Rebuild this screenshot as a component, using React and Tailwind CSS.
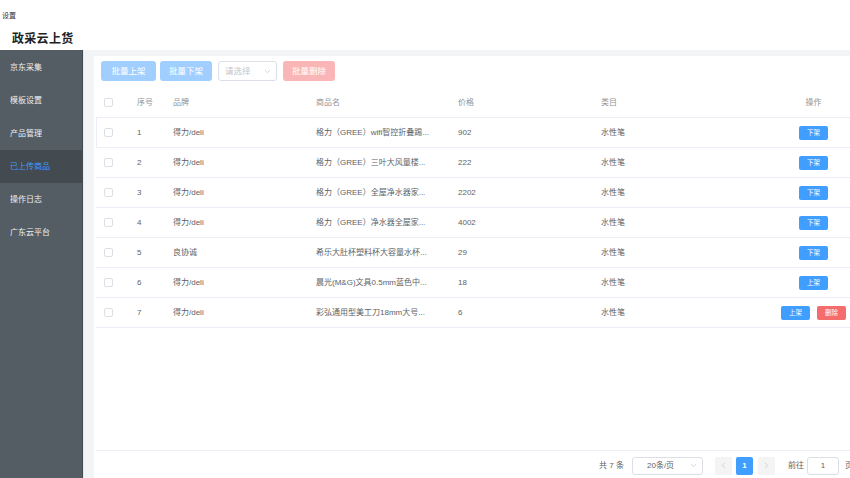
import React from "react";

const FONT = { fontFamily: '"Liberation Sans", "Noto Sans CJK SC", sans-serif' };

const menu = ["京东采集", "模板设置", "产品管理", "已上传商品", "操作日志", "广东云平台"];

const rows = [
  { n: 1, brand: "得力/deli", name: "格力（GREE）wifi智控折叠踢...", price: "902", op: ["下架"] },
  { n: 2, brand: "得力/deli", name: "格力（GREE）三叶大风量楼...", price: "222", op: ["下架"] },
  { n: 3, brand: "得力/deli", name: "格力（GREE）全屋净水器家...", price: "2202", op: ["下架"] },
  { n: 4, brand: "得力/deli", name: "格力（GREE）净水器全屋家...", price: "4002", op: ["下架"] },
  { n: 5, brand: "良协诚", name: "希乐大肚杯塑料杯大容量水杯...", price: "29", op: ["下架"] },
  { n: 6, brand: "得力/deli", name: "晨光(M&G)文具0.5mm蓝色中...", price: "18", op: ["上架"] },
  { n: 7, brand: "得力/deli", name: "彩弘通用型美工刀18mm大号...", price: "6", op: ["上架", "删除"] },
];

const Check = () => (
  <span className="block w-[9px] h-[9px] rounded-[2px] border border-[#dcdfe6] bg-white" />
);

const Chevron = ({ dir = "down", color = "#c0c4cc", size = 7 }) => {
  const d = {
    down: "M2 4l4 4 4-4",
    left: "M8 2L4 6l4 4",
    right: "M4 2l4 4-4 4",
  }[dir];
  return (
    <svg width={size} height={size} viewBox="0 0 12 12" fill="none">
      <path d={d} stroke={color} strokeWidth="1.2" strokeLinecap="round" strokeLinejoin="round" />
    </svg>
  );
};

const GRID = "grid grid-cols-[33px_36px_143px_142px_143px_184px_1fr] items-center";

export default function App() {
  return (
    <div className="w-[850px] h-[478px] overflow-hidden flex flex-col bg-white" style={FONT}>
      <header className="h-[50px] shrink-0 flex flex-col bg-white">
        <div className="pl-[2px] pt-[12px] text-[7px] leading-[8px] text-[#333]">设置</div>
        <div className="pl-[12px] mt-[12px] text-[12px] leading-[14px] font-bold text-[#222] tracking-[0.3px]">政采云上货</div>
      </header>
      <div className="flex flex-1 min-h-0">
        <aside className="w-[83px] shrink-0 bg-[#545c64] border-r border-[#454b52] pt-[1px]">
          {menu.map((m) => {
            const active = m === "已上传商品";
            return (
              <div
                key={m}
                className={
                  "h-[33px] flex items-center pl-[10px] text-[8px] " +
                  (active ? "bg-[#434a50] text-[#409eff]" : "text-[#eef0f2]")
                }
              >
                {m}
              </div>
            );
          })}
        </aside>
        <main className="flex-1 min-w-0 bg-[#f3f4f5] pl-[10px] pt-[6px] border-l border-[#e8e8e8]">
          <div className="h-full bg-white flex flex-col overflow-hidden">
            <div className="flex items-center pt-[5px] pl-[7px] h-[25px]">
              <button className="w-[55px] h-[20px] rounded-[3px] bg-[#a0cfff] text-white text-[8.5px]">批量上架</button>
              <button className="ml-[4px] w-[52px] h-[20px] rounded-[3px] bg-[#a0cfff] text-white text-[8.5px]">批量下架</button>
              <div className="ml-[6px] w-[59px] h-[20px] rounded-[3px] border border-[#dcdfe6] flex items-center justify-between pl-[6px] pr-[5px] text-[8.5px] text-[#c0c4cc]">
                <span>请选择</span>
                <Chevron />
              </div>
              <button className="ml-[6px] w-[52px] h-[20px] rounded-[3px] bg-[#fab6b6] text-white text-[8.5px]">批量删除</button>
            </div>

            <div className="mt-[7px] ml-[2px]">
              <div className={GRID + " h-[30px] text-[8px] text-[#909399] border-b border-[#ebeef5]"}>
                <div className="pl-[8px]"><Check /></div>
                <div className="pl-[8px]">序号</div>
                <div className="pl-[8px]">品牌</div>
                <div className="pl-[8px]">商品名</div>
                <div className="pl-[8px]">价格</div>
                <div className="pl-[8px]">类目</div>
                <div className="text-center">操作</div>
              </div>
              {rows.map((r) => (
                <div
                  key={r.n}
                  className={
                    GRID +
                    " h-[30px] text-[8px] text-[#606266] border-b border-[#ebeef5]" +
                    (r.n === 1 ? " shadow-[inset_1px_0_0_#ebeef5]" : "")
                  }
                >
                  <div className="pl-[8px]"><Check /></div>
                  <div className="pl-[8px]">{r.n}</div>
                  <div className="pl-[8px] whitespace-nowrap">{r.brand}</div>
                  <div className="pl-[8px] whitespace-nowrap">{r.name}</div>
                  <div className="pl-[8px]">{r.price}</div>
                  <div className="pl-[8px]">水性笔</div>
                  <div className="flex justify-center gap-[7px]">
                    {r.op.map((o) => (
                      <button
                        key={o}
                        className={
                          "w-[29px] h-[14px] rounded-[2px] text-white text-[6.5px] leading-[14px] " +
                          (o === "删除" ? "bg-[#f56c6c]" : "bg-[#409eff]")
                        }
                      >
                        {o}
                      </button>
                    ))}
                  </div>
                </div>
              ))}
            </div>

            <div className="flex-1" />

            <div className="ml-[2px] h-[28px] shrink-0 border-t border-[#ebeef5] flex items-center justify-end text-[8px] text-[#606266] mr-[-3px] pt-[2px]">
              <span className="whitespace-nowrap">共 7 条</span>
              <div className="ml-[8px] w-[71px] h-[18px] rounded-[3px] border border-[#dcdfe6] flex items-center justify-between pl-[14px] pr-[5px]">
                <span className="whitespace-nowrap">20条/页</span>
                <Chevron />
              </div>
              <div className="ml-[12px] w-[17px] h-[18px] rounded-[2px] bg-[#f4f4f5] flex items-center justify-center">
                <Chevron dir="left" />
              </div>
              <div className="ml-[4px] w-[17px] h-[18px] rounded-[2px] bg-[#409eff] flex items-center justify-center text-white font-bold">1</div>
              <div className="ml-[5px] w-[17px] h-[18px] rounded-[2px] bg-[#f4f4f5] flex items-center justify-center">
                <Chevron dir="right" />
              </div>
              <span className="ml-[13px] whitespace-nowrap">前往</span>
              <div className="ml-[3px] w-[32px] h-[18px] rounded-[3px] border border-[#dcdfe6] flex items-center justify-center">1</div>
              <span className="ml-[6px] whitespace-nowrap">页</span>
            </div>
          </div>
        </main>
      </div>
    </div>
  );
}
